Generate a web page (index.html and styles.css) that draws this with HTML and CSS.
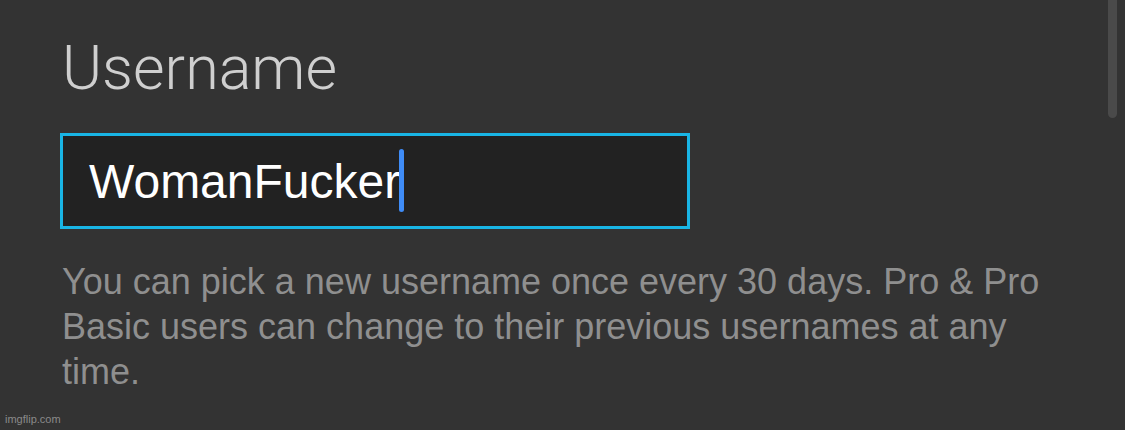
FILE: index.html
```html
<!DOCTYPE html>
<html>
<head>
<meta charset="utf-8">
<link rel="stylesheet" href="styles.css">
</head>
<body>
<div class="page">
  <main class="settings">
    <h1 class="title">Username</h1>
    <div class="field">
      <span class="value">WomanFucker</span><span class="caret"></span>
    </div>
    <p class="help">You can pick a new username once every 30 days. Pro &amp; Pro Basic users can change to their previous usernames at any time.</p>
  </main>
  <div class="scrollbar"><div class="thumb"></div></div>
  <div class="watermark">imgflip.com</div>
</div>
</body>
</html>
```
FILE: styles.css
```css
html, body {
  margin: 0;
  padding: 0;
  background: #333333;
}
.page {
  position: relative;
  width: 1125px;
  height: 430px;
  overflow: hidden;
  background: #333333;
  font-family: "Liberation Sans", Arial, sans-serif;
}
.settings {
  padding: 30px 0 0 62px;
  width: 1000px;
}
.title {
  margin: 0;
  font-family: Roboto, "Liberation Sans", sans-serif;
  font-weight: 300;
  font-size: 61px;
  line-height: 76px;
  color: #cfcfcf;
}
.field {
  margin: 27px 0 0 -2px;
  box-sizing: border-box;
  width: 630px;
  height: 96px;
  border: 3px solid #19b5e5;
  background: #222222;
  display: flex;
  align-items: center;
  padding-left: 26px;
}
.value {
  font-size: 48px;
  color: #ffffff;
  line-height: 1;
  margin-top: 2px;
}
.caret {
  width: 5px;
  height: 63px;
  border-radius: 3px;
  background: #3f8cf7;
  margin-left: -1px;
  margin-top: -2px;
}
.help {
  margin: 30px 0 0 0;
  font-size: 36px;
  line-height: 45px;
  color: #8f8f8f;
}
.scrollbar {
  position: absolute;
  top: 0;
  right: 8px;
  width: 9px;
  height: 430px;
}
.thumb {
  width: 9px;
  height: 118px;
  background: #4a4a4a;
  border-radius: 0 0 5px 5px;
}
.watermark {
  position: absolute;
  left: 5px;
  bottom: 5px;
  font-size: 11px;
  color: #8a8a8a;
}
```
